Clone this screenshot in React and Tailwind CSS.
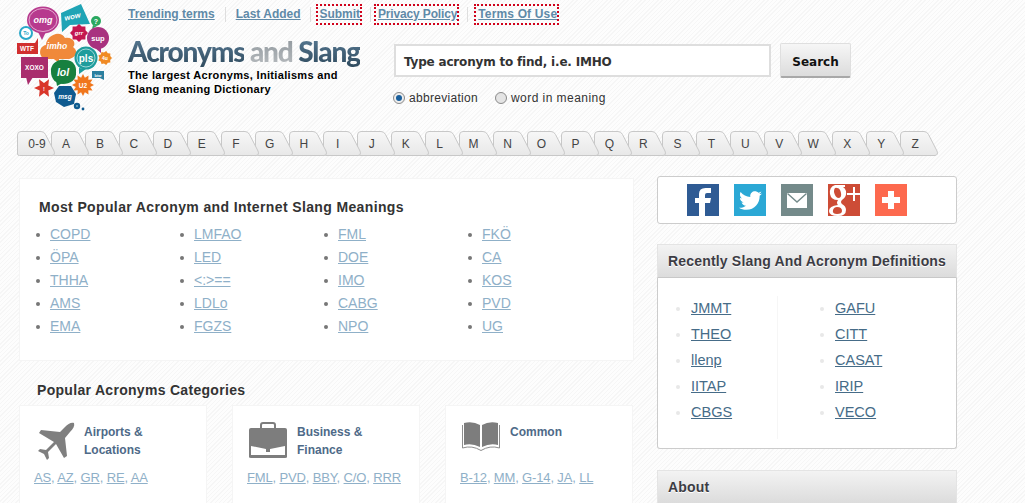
import { FaTwitter } from 'react-icons/fa';

const topLinks = [
  { label: 'Trending terms' },
  { label: 'Last Added' },
  { label: 'Submit', marked: true, extra: 'tracking-[-0.05px]' },
  { label: 'Privacy Policy', marked: true, extra: 'tracking-[-0.15px] -ml-[2px]' },
  { label: 'Terms Of Use', marked: true, extra: 'tracking-[0.15px] ml-[1px]' },
];

const letters = ['0-9', ...'ABCDEFGHIJKLMNOPQRSTUVWXYZ'];

const popular = [
  ['COPD', 'ÖPA', 'THHA', 'AMS', 'EMA'],
  ['LMFAO', 'LED', '<:>==', 'LDLo', 'FGZS'],
  ['FML', 'DOE', 'IMO', 'CABG', 'NPO'],
  ['FKÖ', 'CA', 'KOS', 'PVD', 'UG'],
];

const recent = [
  ['JMMT', 'THEO', 'llenp', 'IITAP', 'CBGS'],
  ['GAFU', 'CITT', 'CASAT', 'IRIP', 'VECO'],
];

function burst(cx, cy, r1, r2, n) {
  const pts = [];
  for (let i = 0; i < n * 2; i++) {
    const r = i % 2 ? r2 : r1;
    const a = (Math.PI * i) / n;
    pts.push(`${(cx + r * Math.cos(a)).toFixed(1)},${(cy + r * Math.sin(a)).toFixed(1)}`);
  }
  return pts.join(' ');
}

function Logo() {
  const label = { fill: '#fff', fontFamily: '"Liberation Sans", sans-serif', fontWeight: 700, textAnchor: 'middle' };
  return (
    <svg viewBox="0 0 125 115" className="w-[125px] h-[115px] flex-shrink-0">
      <path d="M38 32 L42 40 L46 32Z" fill="#b73a8e" />
      <ellipse cx="43" cy="20" rx="16" ry="13.5" fill="#b73a8e" />
      <ellipse cx="43" cy="20" rx="14" ry="11.5" fill="none" stroke="#f0c4e0" strokeWidth="0.8" />
      <text x="43" y="23" fontSize="9" fontStyle="italic" style={label}>omg</text>

      <path d="M61 13 L81 4 L90 24 L70 25 L62 32Z" fill="#1fa4b5" />
      <text x="73" y="19" fontSize="7.5" fontStyle="italic" style={label} transform="rotate(-12 73 19)">wow</text>

      <circle cx="96" cy="21" r="5" fill="#2aa860" />
      <path d="M93 25 L92 29 L97 26Z" fill="#2aa860" />
      <text x="96" y="24" fontSize="7" style={label}>?</text>

      <circle cx="26" cy="33" r="7" fill="#29a8c9" />
      <circle cx="26" cy="33" r="5" fill="#fff" />
      <text x="26" y="35" fontSize="5" style={{ ...label, fill: '#29a8c9' }}>To</text>

      <polygon points={burst(79, 33, 9, 7, 8)} fill="#c4174f" />
      <text x="79" y="35" fontSize="6" fontStyle="italic" style={label}>grr</text>

      <path d="M95 48 L101 53 L101 47Z" fill="#a8327f" />
      <ellipse cx="98" cy="38" rx="11" ry="11" fill="#a8327f" />
      <text x="98" y="41" fontSize="7.5" style={label}>sup</text>

      <path d="M50 56 L59 63 L59 55Z" fill="#f0893a" />
      <path d="M47 59 C38 59 38 46 46 45 C46 36 60 29 65 38 C72 36 77 43 73 47 C80 52 74 59 68 59Z" fill="#f0893a" />
      <text x="57" y="49" fontSize="8.5" fontStyle="italic" style={label}>imho</text>

      <path d="M17 43 L35 43 L38 38 L38 54 L17 54Z" fill="#d12f2f" />
      <text x="27" y="51" fontSize="6.5" style={label}>WTF</text>

      <path d="M79 68 L79 74 L86 69Z" fill="#1e9c9c" />
      <circle cx="86" cy="58" r="11.5" fill="#1e9c9c" />
      <circle cx="86" cy="58" r="9" fill="none" stroke="#bfe7e7" strokeWidth="0.8" />
      <text x="86" y="62" fontSize="10" style={label}>pls</text>

      <polygon points={burst(105, 58, 7, 5.5, 9)} fill="#f08a24" />
      <text x="105" y="60" fontSize="5" style={label}>4u</text>

      <path d="M92 71 H104 V80 L100 78 H92Z" fill="#2b7f9f" />
      <text x="98" y="76.5" fontSize="4" style={label}>btw</text>

      <path d="M26 77 L28 85 L33 77Z" fill="#a92d6d" />
      <rect x="21" y="57" width="27" height="21" fill="#a92d6d" />
      <text x="34.5" y="70" fontSize="6.5" style={label}>XOXO</text>

      <path d="M56 80 L57 86 L64 82Z" fill="#17803f" />
      <path d="M51 72 C50 64 58 59 64 60 C72 59 77 65 76 72 C77 80 70 84 63 84 C56 84 51 79 51 72Z" fill="#17803f" />
      <text x="63" y="76" fontSize="10.5" fontStyle="italic" style={label}>lol</text>

      <polygon points={burst(83, 85, 11, 7.5, 12)} fill="#f0761c" />
      <text x="83" y="88" fontSize="6.5" style={label}>U2</text>

      <polygon points={burst(44, 88, 10, 5, 6)} fill="#d9362a" />
      <text x="44" y="91" fontSize="5.5" style={label}>!</text>

      <polygon points="59,86 71,86 76,94 74,104 64,107 56,102 54,93" fill="#0f5a8f" />
      <text x="65" y="99" fontSize="6.5" fontStyle="italic" style={label}>msg</text>

      <circle cx="77" cy="106" r="3.2" fill="#0f5a8f" />
      <circle cx="77" cy="106" r="1" fill="#7ab" />
      <circle cx="83" cy="109" r="1.4" fill="#0f5a8f" />
    </svg>
  );
}

function Tab({ label, z, first }) {
  return (
    <a className="relative -ml-[4.04px] first:ml-0 block w-[38px] h-[26px] flex-shrink-0" style={{ zIndex: z }}>
      <svg viewBox="0 0 38 26" className="absolute inset-0 w-[38px] h-[26px]">
        <defs>
          <linearGradient id="tabFill" x1="0" y1="0" x2="0" y2="1">
            <stop offset="0" stopColor="#f7f7f7" />
            <stop offset="1" stopColor="#e8e8e8" />
          </linearGradient>
        </defs>
        <path d="M0.5 23 V4 Q0.5 0.5 4 0.5 H24 Q27 0.5 28.5 3.5 L37 20 Q38.5 24 35 24.5 H2.5 Q0.5 24.5 0.5 23Z" fill="url(#tabFill)" stroke="#c8c8c8" />
      </svg>
      <span className={`absolute left-0 top-[6px] text-center text-[12px] leading-[14px] text-[#444] ${first ? 'w-[40px]' : 'w-[30px]'}`}>
        {label}
      </span>
    </a>
  );
}

function SocialIcon({ color, children }) {
  return (
    <a className={`w-8 h-8 flex items-center justify-center overflow-hidden ${color}`}>
      {children}
    </a>
  );
}

function PanelHead({ children }) {
  return (
    <div className="h-[34px] flex items-center pt-[1px] px-[10px] bg-gradient-to-b from-[#f3f3f3] to-[#dcdcdc] border border-[#e4e4e4] border-b-[#c8c8c8]">
      <h3 className="text-[14px] font-bold tracking-[0.18px] whitespace-nowrap text-[#3c3c44] [text-shadow:0_1px_0_#fff]">{children}</h3>
    </div>
  );
}

function CategoryCard({ icon, title, links }) {
  return (
    <div className="w-[188px] h-[110px] bg-white border border-[#f5f5f5] pt-[17px] pl-[14px]">
      <div className="flex h-[45px]">
        <div className="w-[48px] ml-[2px] flex-shrink-0 -mt-[1px]">{icon}</div>
        <div className="text-[12px] font-bold leading-[18px] text-[#4e6a88]">{title}</div>
      </div>
      <div className="text-[13px] -tracking-[0.15px] leading-[20px] text-[#8fb0c8]">
        {links.map((l, i) => (
          <span key={l}>
            <a className="underline">{l}</a>
            {i < links.length - 1 ? ', ' : ''}
          </span>
        ))}
      </div>
    </div>
  );
}

export default function App() {
  return (
    <div className="h-[503px] w-[1025px] overflow-hidden font-['Liberation_Sans',Arial,sans-serif] bg-[repeating-linear-gradient(135deg,#f6f6f6_0,#f6f6f6_1px,#fdfdfd_1px,#fdfdfd_3px)]">
      {/* Header */}
      <header className="flex h-[131px]">
        <Logo />
        <div className="flex-1 ml-[3px]">
          <nav className="flex items-center h-[29px] text-[12px] font-bold text-[#5f8aa8]">
            {topLinks.map((link, i) => (
              <div key={link.label} className="flex items-center">
                {i > 0 && <span className={`w-px h-[15px] bg-[#dedede] ${link.marked ? 'ml-[9px] mr-[6px]' : 'mx-[10px]'}`} />}
                <a className={`underline leading-[15px] ${link.extra || ''} ${link.marked ? 'outline-2 outline-dotted outline-[#d0021b] -outline-offset-1 pl-[3px] pr-[1px] py-[2px]' : ''}`}>
                  {link.label}
                </a>
              </div>
            ))}
          </nav>
          <div className="flex">
            <div className="w-[266px] pt-[6px]">
              <h1 className="text-[28px] leading-[32px] font-black -tracking-[1.15px] font-['Lato',sans-serif] whitespace-nowrap">
                <span className="bg-gradient-to-b from-[#5c7f99] to-[#2f4a5e] bg-clip-text text-transparent">Acronyms</span>{' '}
                <span className="bg-gradient-to-b from-[#8c949a] to-[#b9bdc0] bg-clip-text text-transparent">and</span>{' '}
                <span className="bg-gradient-to-b from-[#5c7f99] to-[#2f4a5e] bg-clip-text text-transparent">Slang</span>
              </h1>
              <p className="mt-[1px] text-[11px] leading-[14px] font-bold tracking-[0.33px] text-black">
                The largest Acronyms, Initialisms and<br />Slang meaning Dictionary
              </p>
            </div>
            <div className="pt-[15px]">
              <div className="flex items-start">
                <div className="w-[377px] h-[33px] bg-white border-2 border-[#dedede] flex items-center pl-[8px] pt-[2px] text-[12px] font-bold text-[#333] font-['DejaVu_Sans',sans-serif] -tracking-[0.19px]">
                  Type acronym to find, i.e. IMHO
                </div>
                <button className="ml-[9px] -mt-px w-[71px] h-[35px] pt-[4px] rounded-[2px] bg-gradient-to-b from-[#f6f6f6] to-[#dcdcdc] border border-[#dfdfdf] border-b-2 border-b-[#a8a8a8] text-[12px] font-bold text-[#111] font-['DejaVu_Sans',sans-serif]">
                  Search
                </button>
              </div>
              <div className="flex items-center mt-[13px] -ml-[1px] text-[12px] tracking-[0.3px] text-[#333] leading-[14px]">
                <span className="w-[12px] h-[12px] rounded-full border border-[#8a8a8a] bg-[#eee] flex items-center justify-center">
                  <span className="w-[6px] h-[6px] rounded-full bg-[#1a5f9c]" />
                </span>
                <span className="ml-[4px]">abbreviation</span>
                <span className="ml-[17px] w-[12px] h-[12px] rounded-full border border-[#8a8a8a] bg-[#e4e4e4]" />
                <span className="ml-[4px] tracking-[0.45px]">word in meaning</span>
              </div>
            </div>
          </div>
        </div>
      </header>

      {/* Letter tabs */}
      <div className="flex pl-[17px] h-[26px]">
        {letters.map((l, i) => (
          <Tab key={l} label={l} z={30 - i} first={i === 0} />
        ))}
      </div>

      {/* Content */}
      <div className="flex pl-[19px] pt-[21px]">
        <main className="w-[615px]">
          <section className="h-[183px] bg-white border border-[#f5f5f5] pt-[18px] pl-[19px]">
            <h2 className="text-[14px] font-bold leading-[20px] tracking-[0.37px] text-[#333]">
              Most Popular Acronym and Internet Slang Meanings
            </h2>
            <div className="flex mt-[6px] -ml-[3px]">
              {popular.map((col, i) => (
                <ul key={i} className="w-[144px] flex-shrink-0">
                  {col.map((item) => (
                    <li key={item} className="flex items-center h-[23px] text-[14px] text-[#8fb0c8]">
                      <span className="w-[4px] h-[4px] rounded-full bg-[#777] mr-[10px] flex-shrink-0" />
                      <a className="underline">{item}</a>
                    </li>
                  ))}
                </ul>
              ))}
            </div>
          </section>

          <h2 className="mt-[19px] ml-[18px] text-[14px] font-bold leading-[20px] tracking-[0.3px] text-[#333]">Popular Acronyms Categories</h2>
          <div className="flex gap-[25px] mt-[5px]">
            <CategoryCard
              title={<>Airports &<br />Locations</>}
              links={['AS', 'AZ', 'GR', 'RE', 'AA']}
              icon={
                <svg viewBox="0 0 40 40" className="w-[40px] h-[40px]">
                  <path d="M38 1 C39 4 37 7 34 10 L29 16 L31 34 L28 36 L20 22 L12 30 L13 36 L11 38 L8 32 L2 29 L4 27 L10 28 L18 20 L3 11 L5 8 L24 10 L29 5 C32 2 35 0 38 1Z" fill="#7f7f7f" />
                </svg>
              }
            />
            <CategoryCard
              title={<>Business &<br />Finance</>}
              links={['FML', 'PVD', 'BBY', 'C/O', 'RRR']}
              icon={
                <svg viewBox="0 0 38 36" className="w-[38px] h-[36px]">
                  <path d="M12 7 V3 Q12 1 14 1 H24 Q26 1 26 3 V7" fill="none" stroke="#7d7d7d" strokeWidth="2" />
                  <path d="M2 6 H36 Q38 6 38 8 V35 Q38 36 36 36 H2 Q0 36 0 35 V8 Q0 6 2 6Z" fill="#7d7d7d" />
                  <path d="M2 24 L17 27 V30 H21 V27 L36 24 V33 H2Z" fill="#fff" />
                </svg>
              }
            />
            <CategoryCard
              title="Common"
              links={['B-12', 'MM', 'G-14', 'JA', 'LL']}
              icon={
                <svg viewBox="0 0 38 29" className="w-[38px] h-[29px]">
                  <path d="M2 1 Q11 -1 18 3 V25 Q10 21 2 23Z" fill="#7d7d7d" />
                  <path d="M36 1 Q27 -1 20 3 V25 Q28 21 36 23Z" fill="#7d7d7d" />
                  <path d="M0.5 3 V26 Q10 23 19 28.5 Q28 23 37.5 26 V3" fill="none" stroke="#8d8d8d" />
                </svg>
              }
            />
          </div>
        </main>

        <aside className="ml-[23px] w-[300px] -mt-[2px]">
          <div className="h-[48px] bg-white border border-[#ccc] rounded-[3px] flex items-center gap-[15px] pl-[29px]">
            <SocialIcon color="bg-[#2f5b94]">
              <svg viewBox="0 0 32 32" className="w-8 h-8">
                <path d="M12 32 V19 H8 V14 H12 V10 Q12 4 18.5 4 H24 V9 H20 Q18 9 18 11 V14 H24 L23 19 H18 V32Z" fill="#fff" />
              </svg>
            </SocialIcon>
            <SocialIcon color="bg-[#2ba8d5]">
              <FaTwitter className="w-[23px] h-[23px] text-white" />
            </SocialIcon>
            <SocialIcon color="bg-[#748a8a]">
              <svg viewBox="0 0 32 32" className="w-8 h-8">
                <rect x="6" y="9" width="20" height="15" fill="#fff" />
                <path d="M6.5 9.5 L16 18 L25.5 9.5" fill="none" stroke="#748a8a" strokeWidth="1.4" />
              </svg>
            </SocialIcon>
            <SocialIcon color="bg-[#cd4c36]">
              <svg viewBox="0 0 32 32" className="w-8 h-8">
                <path d="M17 1 H7 Q1 3 2 10 Q3 16 10 16 Q8 19 10 21 Q1 22 1 27 Q1 32 10 32 Q18 32 18 26 Q18 22 14 20 Q12 18 14 16 Q19 13 18 7 Q17 4 15 3 H17Z M6 8 Q6 3 9 4 Q12 4 13 9 Q14 14 10 14 Q7 13 6 8Z M9 23 Q14 23 14 27 Q14 30 9 30 Q4 30 5 26 Q6 23 9 23Z" fill="#fff" fillRule="evenodd" />
                <path d="M25 3 V9 H19 V11 H25 V17 H27 V11 H32 V9 H27 V3Z" fill="#fff" />
              </svg>
            </SocialIcon>
            <SocialIcon color="bg-[#fd694e]">
              <svg viewBox="0 0 32 32" className="w-8 h-8">
                <path d="M13 7 H19 V13 H25 V19 H19 V25 H13 V19 H7 V13 H13Z" fill="#fff" />
              </svg>
            </SocialIcon>
          </div>

          <div className="mt-[20px] h-[205px] bg-white border-b border-x border-[#ccc] rounded-b-[3px]">
            <div className="-mx-px">
              <PanelHead>Recently Slang And Acronym Definitions</PanelHead>
            </div>
            <div className="flex pt-[18px] pl-[18px]">
              {recent.map((col, i) => (
                <ul key={i} className={`w-[102px] pb-[13px] ${i === 0 ? 'border-r border-[#f6f6f6] mr-[42px]' : ''}`}>
                  {col.map((item) => (
                    <li key={item} className="flex items-center h-[26px] text-[14.5px] text-[#466c88]">
                      <span className="w-[4px] h-[4px] rounded-full bg-[#e8e8e8] mr-[11px] flex-shrink-0" />
                      <a className="underline">{item}</a>
                    </li>
                  ))}
                </ul>
              ))}
            </div>
          </div>

          <div className="mt-[21px] bg-white border-x border-[#ccc]">
            <div className="-mx-px">
              <PanelHead>About</PanelHead>
            </div>
          </div>
        </aside>
      </div>
    </div>
  );
}
